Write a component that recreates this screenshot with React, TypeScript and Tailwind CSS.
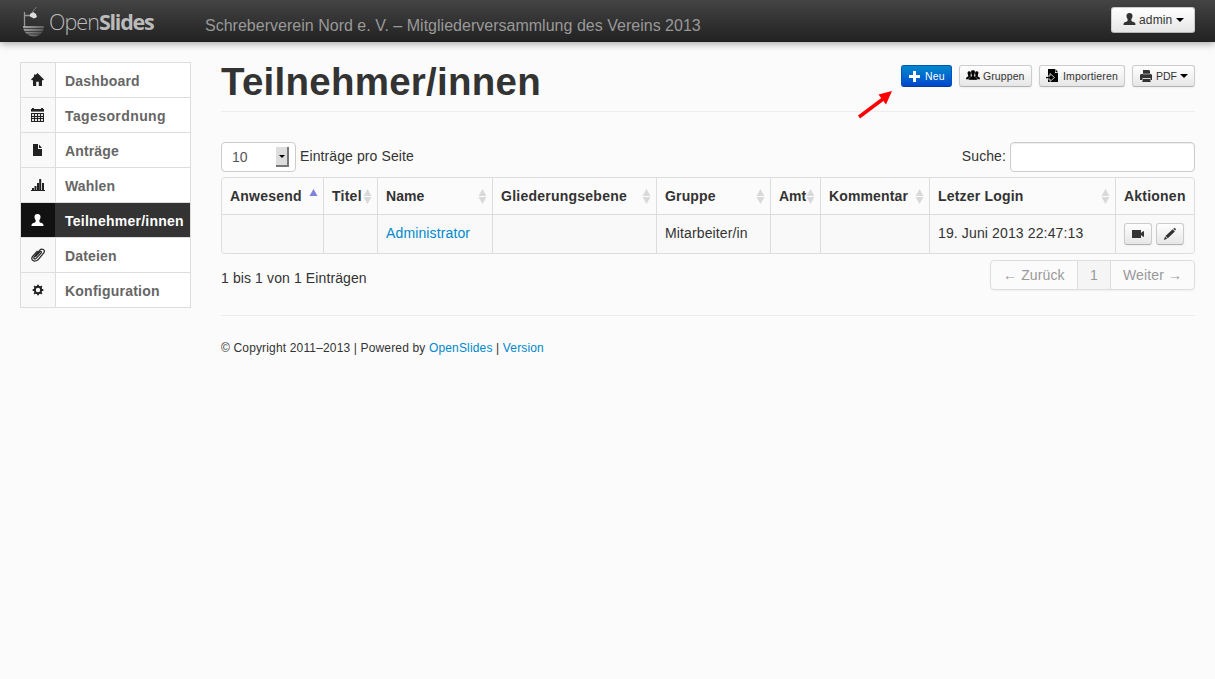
import React from "react";

type IconProps = { className?: string };

function Icon({ children, className = "", size = 14 }: { children: React.ReactNode; className?: string; size?: number }) {
  return (
    <svg viewBox="0 0 14 14" width={size} height={size} fill="currentColor" className={"shrink-0 " + className}>
      {children}
    </svg>
  );
}

const HomeIcon = (p: IconProps) => (
  <Icon {...p}>
    <path d="M6.5 0 13 6.6 12.2 7.3H11V13H7.8V8.7H5.2V13H2V7.3H.8L0 6.6 3 3.6V1.5H4.6V2Z" />
  </Icon>
);
const CalendarIcon = (p: IconProps) => (
  <Icon {...p}>
    <path d="M1 0h2v1h7V0h2v1h1v3H0V1h1zM0 5h13v9H0z" />
    <path d="M0 3h13v1H0z" fill="#777" />
    <path d="M1 6h2v2H1zm3 0h2v2H4zm3 0h2v2H7zm3 0h2v2h-2zM1 9h2v1H1zm3 0h2v1H4zm3 0h2v1H7zm3 0h2v1h-2zM1 11h2v2H1zm3 0h2v2H4zm3 0h2v2H7zm3 0h2v2h-2z" fill="#e4e4e4" />
  </Icon>
);
const FileIcon = (p: IconProps) => (
  <Icon {...p}>
    <path d="M2 1h5v5h4v7H2ZM8 1.500 11 5H8Z" />
  </Icon>
);
const ChartIcon = (p: IconProps) => (
  <Icon {...p}>
    <path d="M0 12h14v1H0zM1 10h2v2H1zM3.500 8h2v4h-2zM6 5h2v7H6zM8.200 1h2v11h-2zM11 5h2v7h-2z" />
  </Icon>
);
const UserIcon = (p: IconProps) => (
  <Icon {...p}>
    <path d="M6.500 1C8.800 1 9.700 2.400 9.500 4.300 9.300 6.100 8.400 7 8.300 7.700c0 1.600.7 1.700 2.400 2.300 1.400.6 1.800 1.200 1.800 3H.5c0-1.800.4-2.400 1.800-3 1.700-.6 2.400-.7 2.400-2.300C4.600 7 3.700 6.100 3.500 4.300 3.300 2.400 4.200 1 6.500 1Z" />
  </Icon>
);
const ClipIcon = (p: IconProps) => (
  <Icon {...p}>
    <path
      d="M4.300 8.800 9 3.800c.9-.9 2 .1 1.200 1.100L5.400 10.200c-1.500 1.600-3.500.2-2.200-1.400L8.600 2.400c2.300-2.600 6.200-.5 4.200 2.500L7.400 11.300c-1.800 2.100-4.900 2.300-6.100.6-1-1.500-.4-2.700.5-3.800L6.500 2.800"
      fill="none"
      stroke="currentColor"
      strokeWidth="1.200"
    />
  </Icon>
);
const GearIcon = (p: IconProps) => (
  <Icon {...p}>
    <circle cx="7" cy="7" r="3.200" fill="none" stroke="currentColor" strokeWidth="2" />
    <path d="M7 1.700v2M7 10.300v2M1.700 7h2M10.300 7h2M3.200 3.200l1.400 1.400M9.400 9.400l1.400 1.400M10.800 3.200 9.400 4.600M4.600 9.400l-1.400 1.400" stroke="currentColor" strokeWidth="1.900" />
  </Icon>
);
const PlusIcon = (p: IconProps) => (
  <Icon {...p}>
    <path d="M5 2h3v4h4v3H8v4H5V9H1V6h4z" />
  </Icon>
);
const GroupIcon = (p: IconProps) => (
  <Icon {...p}>
    <path d="M3.300 2.300c1.500 0 2 .9 1.700 2.300L4.500 6.200c.1.800.5 1 1.100 1.100L4 10.300H0c0-2 .4-2 2.200-2.800V6.200C1.100 4.500 1.300 2.300 3.300 2.300ZM10.700 2.300c-1.500 0-2 .9-1.700 2.300l.5 1.600c-.1.800-.5 1-1.100 1.100l1.600 3h4c0-2-.4-2-2.200-2.800V6.200c1.100-1.700.9-3.900-1.100-3.900Z" />
    <path d="M7 1c1.800 0 2.300 1.300 2 2.900-.2 1.300-.8 1.600-.8 2.500 0 1.100.4 1.300 1.600 1.800 1.300.5 1.500 1 1.500 2.800H2.700c0-1.800.2-2.300 1.500-2.800 1.200-.5 1.600-.7 1.600-1.800C5.800 5.500 5.200 5.200 5 3.900 4.700 2.300 5.200 1 7 1Z" stroke="#eee" strokeWidth=".35" />
  </Icon>
);
const ImportIcon = (p: IconProps) => (
  <Icon {...p}>
    <path d="M2 0h7v4h3v9H2z" />
    <path d="M9.500 0 12 3.200H9.500z" />
    <path d="M0 7h4V4.500L8.500 8.500 4 12.500V10H0z" fill="none" stroke="#ddd" strokeWidth=".9" />
    <path d="M0 8h5v1.200H0z" />
  </Icon>
);
const PrintIcon = (p: IconProps) => (
  <Icon {...p}>
    <path d="M3 1h6l1 1v3H3zM1 5h10l1 1v5h-1.500V9h-8v2H0V6ZM3 10h7l.8 3H2.200z" />
    <path d="M3 5h7M3 9.500h7" stroke="#ccc" strokeWidth=".7" />
  </Icon>
);
const VideoIcon = (p: IconProps) => (
  <Icon {...p}>
    <path d="M1 3h9v3L12 4.300h1v5.400h-1L10 8v3H1Z" />
  </Icon>
);
const PencilIcon = (p: IconProps) => (
  <Icon {...p}>
    <path d="m10.300 1.700.8-.7c.8-.3 2 .9 1.800 1.700l-.8.900ZM9.700 2.200l2.200 2.200L4.800 11.300l-2.300-2.300ZM2.100 9.600l2.100 2.100L.8 13Z" />
  </Icon>
);

function Caret() {
  return <span className="inline-block h-0 w-0 border-x-4 border-t-4 border-x-transparent border-t-black" />;
}

function Logo() {
  return (
    <div className="flex w-[180px] items-start pl-[22px]">
      <svg width="24" height="31" viewBox="0 0 24 31" className="mt-[6px] shrink-0">
        <defs>
          <linearGradient id="bowl" x2="1" y2=".4">
            <stop stopColor="#aaa" />
            <stop offset="1" stopColor="#555" />
          </linearGradient>
        </defs>
        <path d="M2.500 6v14M2 9.500h6" stroke="#999" strokeWidth="1.300" />
        <path d="m8 8 3-2 3 2 1 3-3 1.500-4-2Z" fill="#ddd" />
        <path d="m10 6.500 4.500-5.500" stroke="#888" strokeWidth=".8" />
        <path d="M1 20h21c0 6-4.500 10.500-10 10.500S1 26 1 20Z" fill="url(#bowl)" />
        <path d="M1 22.500h21M2 25.500h19M5 28h14" stroke="#333" strokeWidth=".8" />
      </svg>
      <span className="ml-[3px] mt-[6px] whitespace-nowrap font-['Open_Sans','Liberation_Sans',sans-serif] text-[21.500px] leading-[32px] text-[#bbb]">
        <span className="font-light tracking-[-0.950px]">Open</span>
        <span className="font-bold tracking-[-1.250px]">Slides</span>
      </span>
    </div>
  );
}

const nav = [
  { label: "Dashboard", icon: HomeIcon, spacing: "tracking-[0.180px]" },
  { label: "Tagesordnung", icon: CalendarIcon, spacing: "tracking-[0.400px]" },
  { label: "Anträge", icon: FileIcon, spacing: "tracking-[0.150px]" },
  { label: "Wahlen", icon: ChartIcon, spacing: "tracking-[0.150px]" },
  { label: "Teilnehmer/innen", icon: UserIcon, spacing: "tracking-[0.250px]", active: true },
  { label: "Dateien", icon: ClipIcon, spacing: "tracking-[0.150px]" },
  { label: "Konfiguration", icon: GearIcon, spacing: "tracking-[0.230px]" },
];

function Sidebar() {
  return (
    <nav className="w-[171px] shrink-0 self-start border border-[#ddd] bg-white">
      {nav.map(({ label, icon: I, spacing, active }, i) => (
        <a
          key={label}
          className={
            "flex text-[14px] font-bold leading-[20px] " +
            (i > 0 ? "border-t border-[#ddd] " : "") +
            (active ? "bg-[#333] text-white" : "text-[#666]")
          }
        >
          <span
            className={
              "flex h-[34px] w-[35px] items-center border-r pl-[10px] " +
              (active ? "border-[#333] bg-[#111] text-white" : "border-[#ddd] bg-[#f9f9f9] text-[#222]")
            }
          >
            <I />
          </span>
          <span className={"whitespace-nowrap pl-[9px] pt-[8px] " + spacing}>{label}</span>
        </a>
      ))}
    </nav>
  );
}

const btn =
  "flex items-center rounded-[3px] border border-[#ccc] border-b-[#b3b3b3] bg-linear-to-b from-white to-[#e6e6e6] text-[#333] shadow-[0_1px_2px_rgba(0,0,0,0.05)] whitespace-nowrap";

function SortArrows() {
  return (
    <svg width="9" height="15" viewBox="0 0 9 15" className="shrink-0" fill="#d9d9d9">
      <path d="M4.500 0 8.500 7h-8ZM.5 8h8L4.500 15Z" />
    </svg>
  );
}

const columns = [
  { label: "Anwesend", spacing: "tracking-[0.220px]" },
  { label: "Titel", spacing: "tracking-[0.250px]" },
  { label: "Name", spacing: "tracking-[0.050px]" },
  { label: "Gliederungsebene", spacing: "tracking-[0.240px]" },
  { label: "Gruppe", spacing: "tracking-[0.150px]" },
  { label: "Amt", spacing: "" },
  { label: "Kommentar", spacing: "tracking-[0.130px]" },
  { label: "Letzer Login", spacing: "tracking-[0.200px]" },
  { label: "Aktionen", spacing: "tracking-[0.220px]" },
];
const cells = ["", "", "Administrator", "", "Mitarbeiter/in", "", "", "19. Juni 2013 22:47:13", "actions"];
const tableGrid = "grid grid-cols-[101px_54px_115px_164px_114px_50px_109px_186px_79px]";

export default function App() {
  return (
    <div className="flex min-h-[679px] w-[1215px] flex-col bg-[#fbfbfb] font-['Liberation_Sans',Arial,sans-serif] text-[14px] leading-[20px] text-[#333]">
      <header className="flex h-[42px] shrink-0 bg-linear-to-b from-[#444] to-[#222] shadow-[0_1px_8px_rgba(0,0,0,0.4)]">
        <Logo />
        <div className="ml-[25px] whitespace-nowrap pt-[16px] text-[16px] leading-[20px] tracking-[0.015px] text-[#999]">
          Schreberverein Nord e. V. – Mitgliederversammlung des Vereins 2013
        </div>
        <button className={btn + " ml-auto mr-[20px] mt-[7px] h-[26px] w-[84px] pl-[11px] text-[12px]"}>
          <UserIcon className="mb-[2px] mr-[2px]" />
          <span className="mr-[4px] tracking-[0.150px]">admin</span>
          <Caret />
        </button>
      </header>

      <div className="flex pl-[20px] pr-[20px] pt-[20px]">
        <Sidebar />
        <main className="ml-[30px] flex w-[974px] flex-col">
          <div className="flex h-[50px] items-start border-b border-[#eee]">
            <h1 className="text-[38.500px] font-bold leading-[40px] tracking-[0.250px]">Teilnehmer/innen</h1>
            <div className="ml-auto flex gap-[7px] pt-[3px] text-[10.500px] leading-[14px]">
              <button className="flex h-[22px] w-[51px] items-center whitespace-nowrap rounded-[3px] border border-[#0055bb] border-b-[#003c99] bg-linear-to-b from-[#0088cc] to-[#0044cc] pl-[6px] text-white">
                <PlusIcon className="mr-[3px]" />
                <span className="tracking-[0.200px]">Neu</span>
              </button>
              <button className={btn + " h-[22px] w-[73px] pl-[6px]"}>
                <GroupIcon className="mr-[3px] text-black" />
                <span className="tracking-[0.100px]">Gruppen</span>
              </button>
              <button className={btn + " h-[22px] w-[86px] pl-[6px]"}>
                <ImportIcon className="mr-[3px] text-black" />
                <span className="tracking-[0.180px]">Importieren</span>
              </button>
              <button className={btn + " h-[22px] w-[63px] pl-[7px]"}>
                <PrintIcon className="mr-[2px]" />
                <span className="mr-[3px]">PDF</span>
                <Caret />
              </button>
            </div>
          </div>

          <div className="mt-[30px] flex h-[30px] items-start">
            <div className="flex h-[30px] w-[75px] items-center rounded-[4px] border border-[#ccc] bg-white pl-[10px] text-[#555]">
              <span className="w-[44px]">10</span>
              <span className="flex h-[20px] w-[13px] items-center justify-center border-b-2 border-r-2 border-b-[#777] border-r-[#777] bg-[#ddd]">
                <span className="h-0 w-0 border-x-[3px] border-t-[3px] border-x-transparent border-t-black" />
              </span>
            </div>
            <span className="ml-[4px] pt-[4px] tracking-[0.100px]">Einträge pro Seite</span>
            <span className="ml-auto mr-[4px] pt-[4px] tracking-[0.100px]">Suche:</span>
            <input aria-label="Suche" className="h-[30px] w-[185px] rounded-[4px] border border-[#ccc] bg-white shadow-[inset_0_1px_1px_rgba(0,0,0,0.075)] outline-none" />
          </div>

          <div className="mt-[5px] rounded-[4px] border border-[#ddd]">
            <div className={tableGrid + " h-[36px] font-bold"}>
              {columns.map((c, i) => (
                <div key={c.label} className={"flex items-center whitespace-nowrap pl-[8px] " + (i > 0 ? "border-l border-[#ddd]" : "")}>
                  <span className={c.spacing}>{c.label}</span>
                  {i === 0 && (
                    <svg width="9" height="7" viewBox="0 0 9 7" className="mb-[7px] ml-auto mr-[5px]" fill="#8080e0">
                      <path d="M4.500 0 8.500 7h-8Z" />
                    </svg>
                  )}
                  {i > 0 && i < 8 && (
                    <span className="ml-auto mr-[5px] flex">
                      <SortArrows />
                    </span>
                  )}
                </div>
              ))}
            </div>
            <div className={tableGrid + " h-[39px] rounded-b-[4px] border-t border-[#ddd] bg-[#f9f9f9]"}>
              {cells.map((c, i) => (
                <div
                  key={i}
                  className={
                    "whitespace-nowrap pl-[8px] pt-[8px] tracking-[0.130px] " +
                    (i > 0 ? "border-l border-[#ddd] " : "") +
                    (i === 2 ? "text-[#0088cc]" : "")
                  }
                >
                  {c === "actions" ? (
                    <div className="flex gap-[4px]">
                      <button aria-label="Projektor" className={btn + " h-[22px] w-[28px] justify-center"}>
                        <VideoIcon />
                      </button>
                      <button aria-label="Bearbeiten" className={btn + " h-[22px] w-[28px] justify-center"}>
                        <PencilIcon />
                      </button>
                    </div>
                  ) : (
                    c
                  )}
                </div>
              ))}
            </div>
          </div>

          <div className="mt-[6px] flex h-[30px] items-start">
            <span className="pt-[8px] tracking-[0.110px]">1 bis 1 von 1 Einträgen</span>
            <div className="ml-auto flex h-[30px] rounded-[4px] border border-[#ddd] leading-[28px] text-[#999] shadow-[0_1px_2px_rgba(0,0,0,0.05)]">
              <span className="w-[86px] whitespace-nowrap pl-[12px] tracking-[0.130px]">← Zurück</span>
              <span className="w-[33px] border-l border-[#ddd] bg-[#f5f5f5] text-center">1</span>
              <span className="w-[84px] whitespace-nowrap border-l border-[#ddd] pl-[12px] tracking-[0.130px]">Weiter →</span>
            </div>
          </div>

          <footer className="mt-[25px] border-t border-[#eee] pt-[22px] text-[12px] tracking-[0.155px]">
            © Copyright 2011–2013 | Powered by <a className="text-[#0088cc]">OpenSlides</a> | <a className="text-[#0088cc]">Version</a>
          </footer>
        </main>
      </div>

      <svg width="36" height="29" viewBox="0 0 36 29" className="absolute left-[857px] top-[90px]">
        <path d="m2 27 24-18" stroke="#f00" strokeWidth="3.500" />
        <path d="m35 1-13.500 3.500 7.500 10Z" fill="#f00" />
      </svg>
    </div>
  );
}
